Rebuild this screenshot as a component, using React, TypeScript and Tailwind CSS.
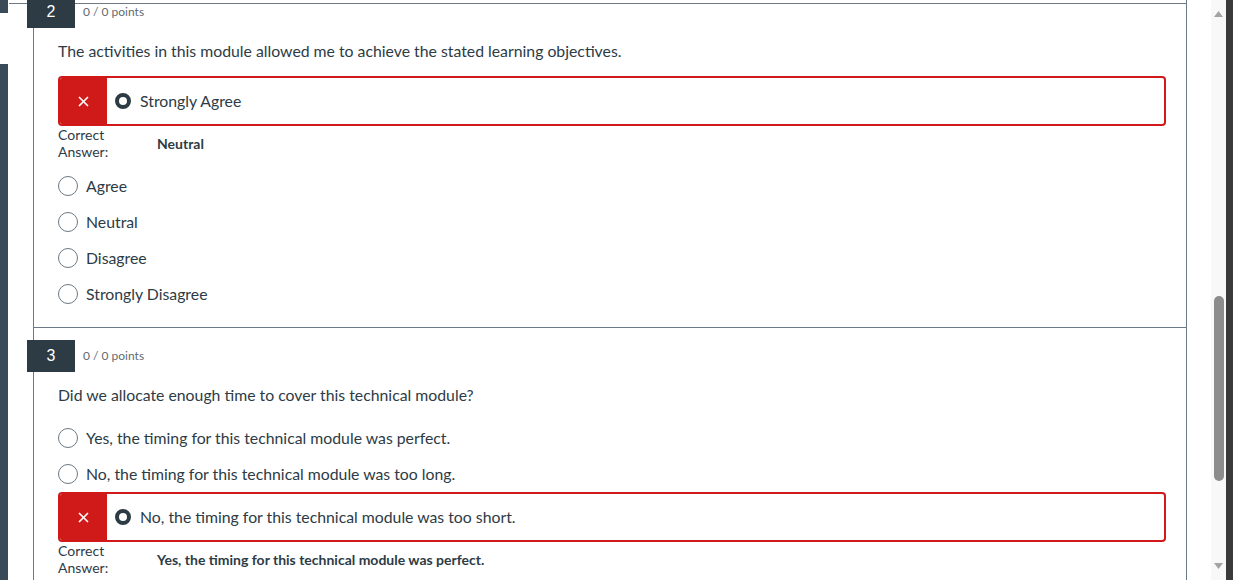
import { ReactNode } from "react";

interface Question {
    number: number;
    text: string;
    options: string[];
    picked: string;
    correct: string;
}

const questions: Question[] = [
    {
        number: 2,
        text: "The activities in this module allowed me to achieve the stated learning objectives.",
        options: ["Strongly Agree", "Agree", "Neutral", "Disagree", "Strongly Disagree"],
        picked: "Strongly Agree",
        correct: "Neutral",
    },
    {
        number: 3,
        text: "Did we allocate enough time to cover this technical module?",
        options: [
            "Yes, the timing for this technical module was perfect.",
            "No, the timing for this technical module was too long.",
            "No, the timing for this technical module was too short.",
        ],
        picked: "No, the timing for this technical module was too short.",
        correct: "Yes, the timing for this technical module was perfect.",
    },
];

function WrongAnswer({ label }: { label: string }) {
    return (
        <div className="flex h-[50px] items-stretch overflow-hidden rounded-[4px] border-2 border-[#d01a19]">
            <div className="flex w-[47px] items-center justify-center bg-[#d01a19]">
                <svg width="11" height="11" viewBox="0 0 11 11">
                    <path d="M1 1 L10 10 M10 1 L1 10" stroke="white" strokeWidth="1.6" />
                </svg>
            </div>
            <div className="ml-2 flex items-center">
                <span className="h-4 w-4 rounded-full border-[4px] border-[#2d3b45]" />
                <span className="ml-[9px] text-[15.8px] text-[#2d3b45]">{label}</span>
            </div>
        </div>
    );
}

function CorrectAnswer({ children }: { children: ReactNode }) {
    return (
        <div className="mb-[7px] flex h-[35px] items-center">
            <div className="w-[99px] pb-[2px] text-[14px] leading-[17px] text-[#2d3b45]">
                <div className="w-[56px]">Correct Answer:</div>
            </div>
            <div className="text-sm font-bold text-[#2d3b45]">{children}</div>
        </div>
    );
}

function Option({ label }: { label: string }) {
    return (
        <div className="flex h-9 items-center">
            <span className="h-5 w-5 rounded-full border border-[#6b7780]" />
            <span className="ml-2 text-[15.8px] text-[#2d3b45]">{label}</span>
        </div>
    );
}

function QuestionBlock({ q }: { q: Question }) {
    return (
        <section className="border-x border-b border-[#6b7a86] pt-[12px] pb-[15px]">
            <div className="flex items-center">
                <div className="relative z-10 -ml-[7px] flex h-[32px] w-[48px] items-center justify-center bg-[#2d3b45] font-['Liberation_Sans',sans-serif] text-base text-white">
                    {q.number}
                </div>
                <span className="ml-2 text-xs text-[#5f6b74]">0 / 0 points</span>
            </div>

            <div className="mt-[11px] pl-6 pr-5">
                <p className="text-[15.8px] leading-6 text-[#2d3b45]">{q.text}</p>

                <div className="mt-[13px]">
                    {q.options.map((opt) =>
                        opt === q.picked ? (
                            <div key={opt}>
                                <WrongAnswer label={opt} />
                                <CorrectAnswer>{q.correct}</CorrectAnswer>
                            </div>
                        ) : (
                            <Option key={opt} label={opt} />
                        )
                    )}
                </div>
            </div>
        </section>
    );
}

export default function App() {
    return (
        <div className="flex h-[580px] w-[1233px] overflow-hidden bg-white font-['Lato','Noto_Sans',sans-serif]">
            {/* left nav strip */}
            <div className="flex w-2 flex-col">
                <div className="h-[13px] bg-[#394b58]" />
                <div className="h-[51px]" />
                <div className="flex-1 bg-[#394b58]" />
            </div>

            <main className="relative flex-1 overflow-hidden">
                <div className="absolute left-px top-[3px] h-px w-[1178px] bg-[#6b7a86]" />
                <div className="-mt-[16px] ml-[25px] w-[1154px]">
                    {questions.map((q) => (
                        <QuestionBlock key={q.number} q={q} />
                    ))}
                </div>
            </main>

            {/* scrollbar */}
            <div className="flex w-[15px] flex-col items-center bg-[#f8f8f8] py-[11px]">
                <svg width="9" height="6" viewBox="0 0 9 6">
                    <path d="M4.5 0 L9 6 L0 6 Z" fill="#a3a3a3" />
                </svg>
                <div className="mt-[279px] h-[185px] w-[10px] rounded-full bg-[#8c8c8c]" />
                <div className="flex-1" />
                <svg width="9" height="6" viewBox="0 0 9 6">
                    <path d="M0 0 L9 0 L4.5 6 Z" fill="#a3a3a3" />
                </svg>
            </div>
            <div className="w-[7px] bg-[#3a3a3a]" />
        </div>
    );
}
